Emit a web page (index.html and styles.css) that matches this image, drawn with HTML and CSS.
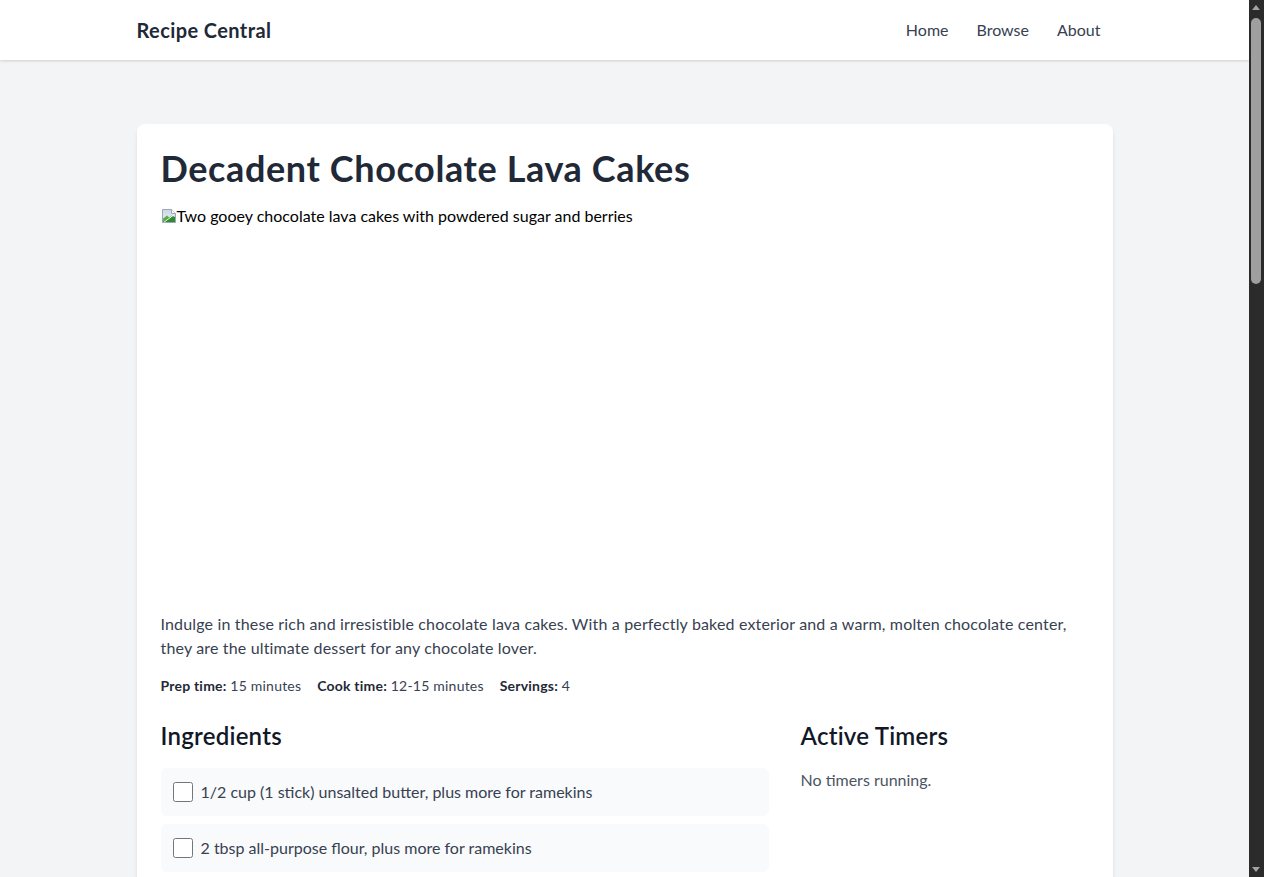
FILE: index.html
```html
<!DOCTYPE html>
<html lang="en">
<head>
<meta charset="utf-8">
<title>Recipe Central</title>
<link rel="stylesheet" href="styles.css">
</head>
<body>
<div class="page">
<header class="site-header">
  <div class="container header-inner">
    <a class="brand" href="#">Recipe Central</a>
    <nav class="nav">
      <a href="#">Home</a>
      <a href="#">Browse</a>
      <a href="#">About</a>
    </nav>
  </div>
</header>
<main class="container main">
  <article class="card">
    <h1 class="title">Decadent Chocolate Lava Cakes</h1>
    <div class="hero">
      <svg class="broken" width="16" height="16" viewBox="0 0 16 16" aria-hidden="true">
        <defs>
          <linearGradient id="sky" x1="0" y1="0" x2="0" y2="1">
            <stop offset="0" stop-color="#c9d6e3"/>
            <stop offset="1" stop-color="#eef3f7"/>
          </linearGradient>
        </defs>
        <path d="M1.5 1.5h9l4 4v9h-13z" fill="url(#sky)" stroke="#9aa8b6" stroke-width="1"/>
        <path d="M10.5 1.5v4h4" fill="#ffffff" stroke="#9aa8b6" stroke-width="1"/>
        <path d="M2 14V10.5l4-3 4 3.5 4-2.5V14z" fill="#5cae4e"/>
        <path d="M2 14l9-6.5 3 1.8V14z" fill="#2e8b2e"/>
        <path d="M3 14.2l9.5-7" stroke="#ffffff" stroke-width="1"/>
      </svg><span class="alt">Two gooey chocolate lava cakes with powdered sugar and berries</span>
    </div>
    <p class="intro">Indulge in these rich and irresistible chocolate lava cakes. With a perfectly baked exterior and a warm, molten chocolate center, they are the ultimate dessert for any chocolate lover.</p>
    <div class="meta">
      <span><b>Prep time:</b> 15 minutes</span>
      <span><b>Cook time:</b> 12-15 minutes</span>
      <span><b>Servings:</b> 4</span>
    </div>
    <div class="columns">
      <section class="ingredients">
        <h2>Ingredients</h2>
        <ul class="ing-list">
          <li><label><input type="checkbox"><span>1/2 cup (1 stick) unsalted butter, plus more for ramekins</span></label></li>
          <li><label><input type="checkbox"><span>2 tbsp all-purpose flour, plus more for ramekins</span></label></li>
          <li><label><input type="checkbox"><span>4 oz bittersweet chocolate, chopped</span></label></li>
        </ul>
      </section>
      <aside class="timers">
        <h2>Active Timers</h2>
        <p class="empty">No timers running.</p>
      </aside>
    </div>
  </article>
</main>
</div>
<div class="scrollbar" aria-hidden="true">
  <span class="sb-arrow sb-up"></span>
  <span class="sb-thumb"></span>
  <span class="sb-arrow sb-down"></span>
</div>
</body>
</html>
```
FILE: styles.css
```css
* { box-sizing: border-box; }
html, body { margin: 0; padding: 0; }
body {
  background: #f3f4f6;
  font-family: "Lato", "Noto Sans", sans-serif;
  color: #1f2937;
  font-size: 16px;
  line-height: 1.5;
}
.page {
  margin-right: 15px;
}
a { text-decoration: none; color: inherit; }
.container {
  max-width: 976px;
  margin: 0 auto;
}
.site-header {
  background: #fff;
  box-shadow: 0 1px 3px rgba(0,0,0,0.1), 0 1px 2px rgba(0,0,0,0.06);
}
.header-inner {
  height: 60px;
  display: flex;
  align-items: center;
  justify-content: space-between;
}
.brand {
  font-size: 20px;
  font-weight: 700;
  color: #1f2937;
  line-height: 28px;
  letter-spacing: 0.02em;
}
.nav {
  display: flex;
  gap: 4px;
}
.nav a {
  padding: 8px 12px;
  color: #374151;
  font-size: 16px;
  line-height: 24px;
}
.main {
  padding-top: 64px;
}
.card {
  background: #fff;
  border-radius: 8px;
  box-shadow: 0 4px 6px -1px rgba(0,0,0,0.08), 0 2px 4px -1px rgba(0,0,0,0.05);
  padding: 24px;
}
.title {
  margin: 0 0 16px;
  font-size: 36px;
  line-height: 40px;
  font-weight: 700;
  color: #1f2937;
  letter-spacing: 0.017em;
}
.hero {
  height: 384px;
  margin-bottom: 24px;
  color: #000;
  font-size: 16px;
  line-height: 24px;
}
.broken { vertical-align: -2px; }
.intro {
  margin: 0 0 16px;
  color: #374151;
  font-size: 16px;
  line-height: 24px;
  letter-spacing: 0.01em;
}
.meta {
  display: flex;
  gap: 16px;
  font-size: 14px;
  line-height: 20px;
  color: #374151;
  margin-bottom: 24px;
  letter-spacing: 0.015em;
}
.meta b { color: #1f2937; font-weight: 700; }
.columns {
  display: grid;
  grid-template-columns: 608px 288px;
  gap: 32px;
}
h2 {
  margin: 0 0 16px;
  font-size: 24px;
  line-height: 32px;
  font-weight: 600;
  color: #111827;
  letter-spacing: 0.01em;
}
.ing-list {
  list-style: none;
  margin: 0;
  padding: 0;
  display: flex;
  flex-direction: column;
  gap: 8px;
}
.ing-list li {
  background: #f9fafb;
  border-radius: 6px;
  padding: 12px;
}
.ing-list label {
  display: flex;
  align-items: center;
  gap: 8px;
  color: #374151;
}
.ing-list input {
  width: 20px;
  height: 20px;
  margin: 0;
}
.empty {
  margin: 0;
  color: #4b5563;
}
.scrollbar {
  position: fixed;
  top: 0;
  right: 0;
  width: 15px;
  height: 100vh;
  background: #2b2b2b;
}
.sb-arrow {
  position: absolute;
  left: 3px;
  width: 0;
  height: 0;
  border-left: 4.5px solid transparent;
  border-right: 4.5px solid transparent;
}
.sb-up {
  top: 5px;
  border-bottom: 5px solid #a3a3a3;
}
.sb-down {
  bottom: 5px;
  border-top: 5px solid #a3a3a3;
}
.sb-thumb {
  position: absolute;
  top: 18px;
  left: 2px;
  width: 10px;
  height: 266px;
  border-radius: 5px;
  background: #9f9f9f;
}
```
